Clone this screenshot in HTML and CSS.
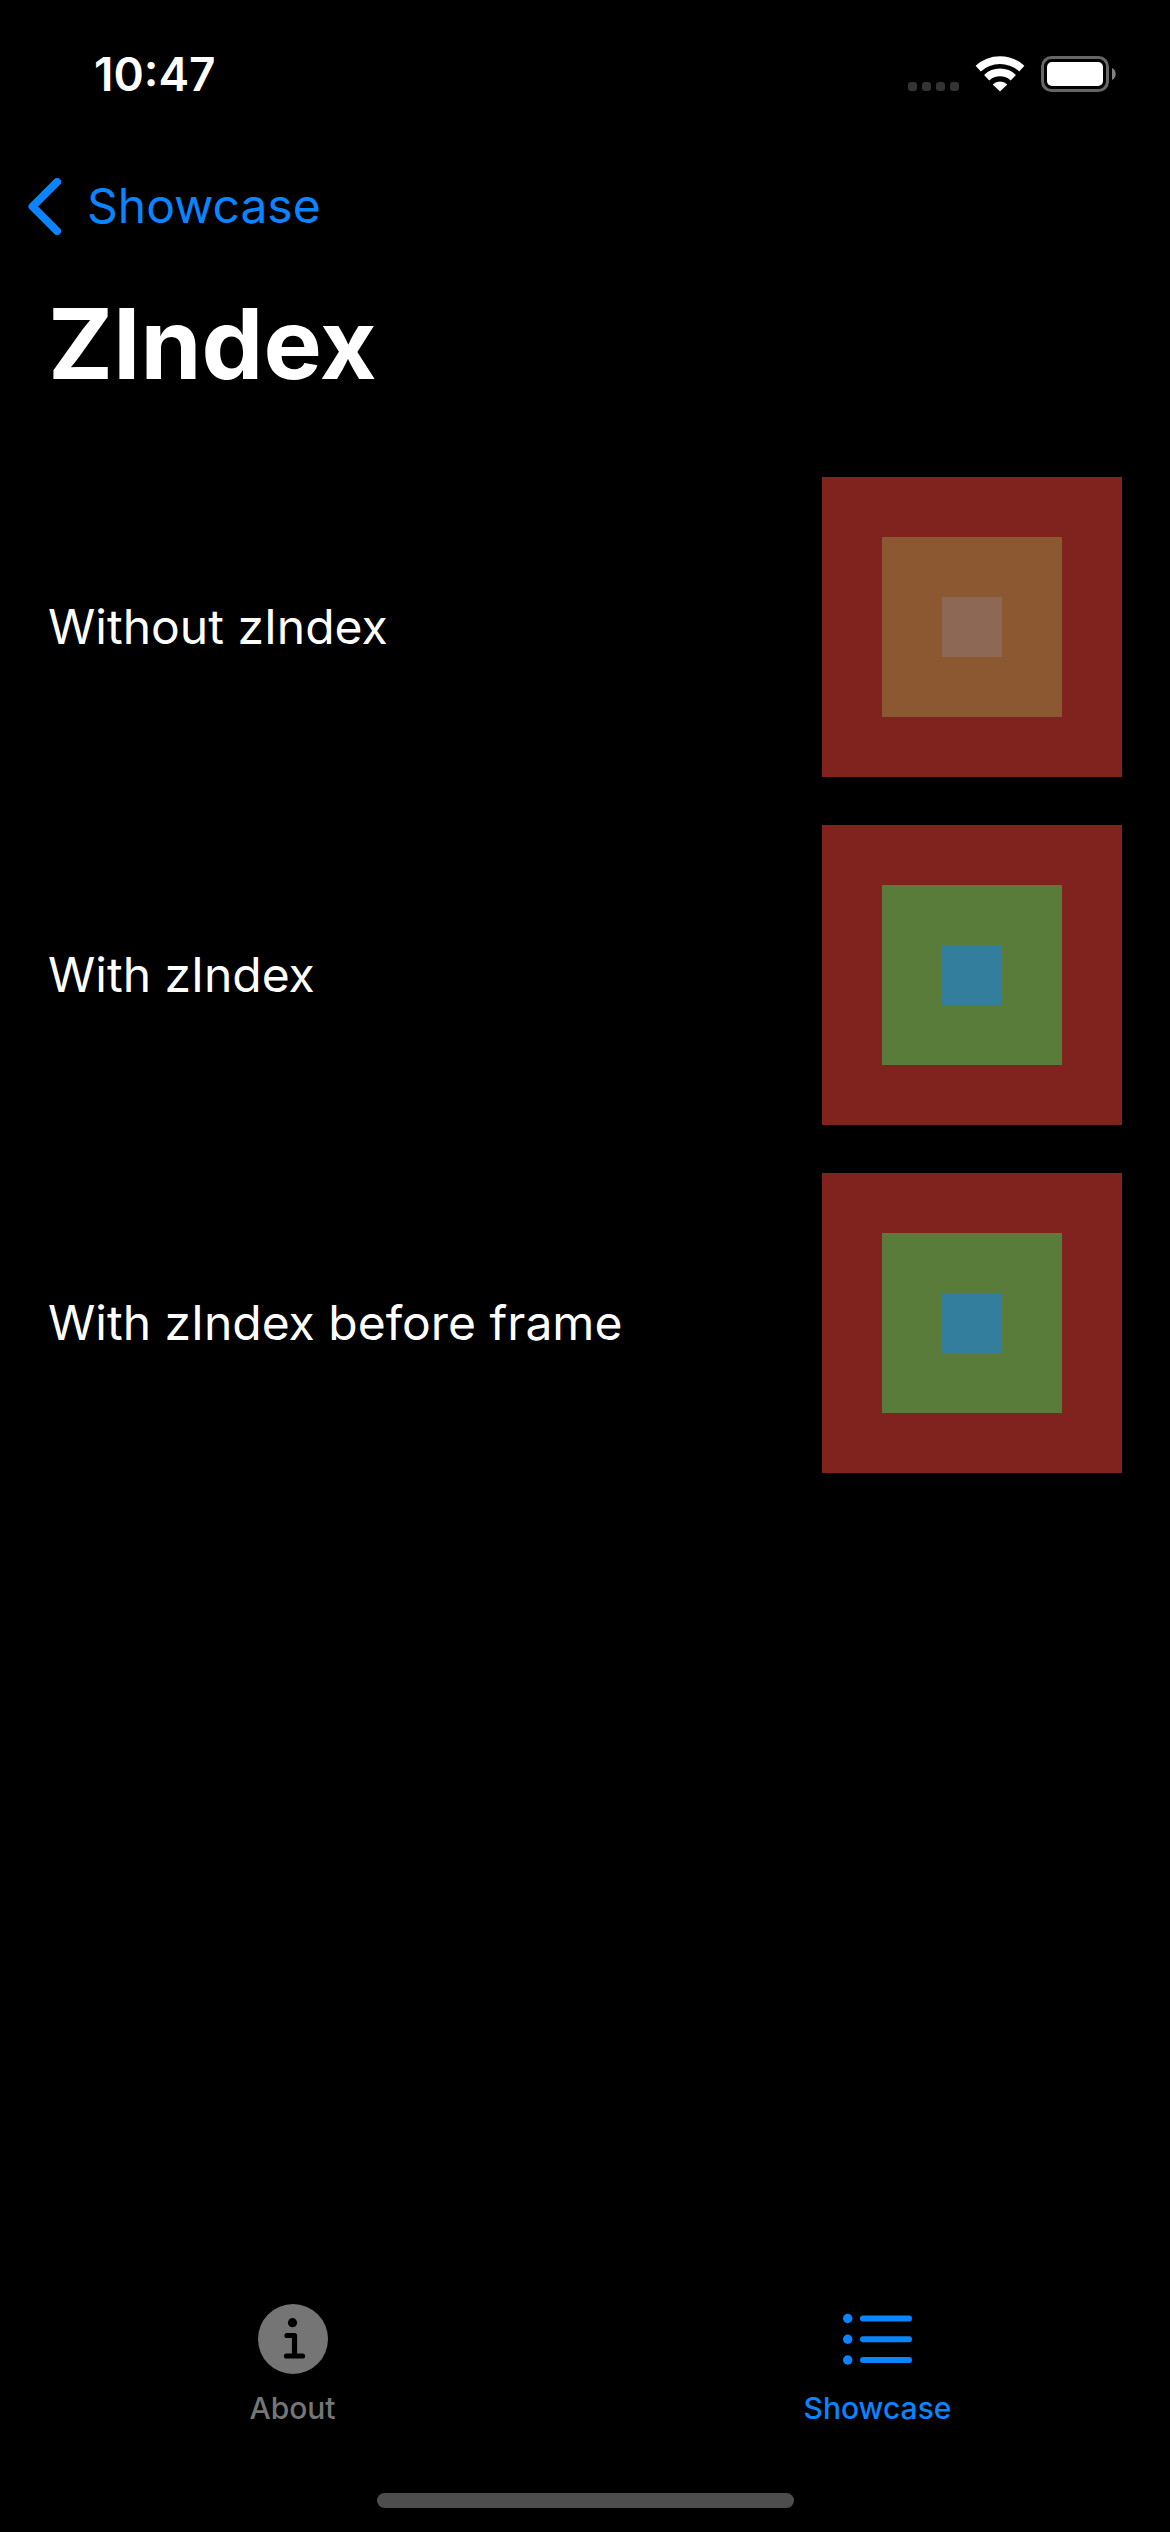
FILE: index.html
```html
<!DOCTYPE html>
<html lang="en">
<head>
<meta charset="utf-8">
<meta name="viewport" content="width=device-width, initial-scale=1">
<title>ZIndex</title>
<link rel="stylesheet" href="styles.css">
</head>
<body>
<div class="status-bar">
  <time class="clock">10:47</time>
  <div class="indicators">
    <svg class="cellular" width="51" height="36" viewBox="0 0 51 36" aria-hidden="true">
      <rect x="0" y="26" width="9" height="9" rx="3"/>
      <rect x="14" y="26" width="9" height="9" rx="3"/>
      <rect x="28" y="26" width="9" height="9" rx="3"/>
      <rect x="42" y="26" width="9" height="9" rx="3"/>
    </svg>
    <svg width="50" height="36" viewBox="0 0 50 36" aria-hidden="true">
      <g fill="none" stroke="#fff" stroke-width="7.7">
        <path d="M3.2 12.6A32 32 0 0 1 46.8 12.6"/>
        <path d="M11.7 21.7A19.5 19.5 0 0 1 38.3 21.7"/>
      </g>
      <path fill="#fff" d="M25 35.500L17.7 28.4A10.7 10.7 0 0 1 32.3 28.4Z"/>
    </svg>
    <svg width="75" height="36" viewBox="0 0 75 36" aria-hidden="true">
      <rect x="1.5" y="1.5" width="65" height="33" rx="9" fill="none" stroke="#666" stroke-width="3"/>
      <rect x="6" y="6" width="56" height="24" rx="5" fill="#fff"/>
      <path fill="#808080" d="M71 12C76 14 76 22 71 24Z"/>
    </svg>
  </div>
</div>

<header class="header">
  <a class="back" href="#showcase">
    <svg width="33" height="57" viewBox="0 0 33 57" aria-hidden="true">
      <path d="M29 4L4.500 28.500L29 53" fill="none" stroke="currentColor" stroke-width="8" stroke-linecap="round" stroke-linejoin="round"/>
    </svg>
    <span>Showcase</span>
  </a>
  <h1 class="title">ZIndex</h1>
</header>

<main class="content">
  <ul class="examples">
    <li class="example">
      <span>Without zIndex</span>
      <div class="square outer"><div class="square middle behind"><div class="square inner behind"></div></div></div>
    </li>
    <li class="example">
      <span>With zIndex</span>
      <div class="square outer"><div class="square middle"><div class="square inner"></div></div></div>
    </li>
    <li class="example">
      <span>With zIndex before frame</span>
      <div class="square outer"><div class="square middle"><div class="square inner"></div></div></div>
    </li>
  </ul>
</main>

<nav class="tab-bar">
  <a class="tab" href="#about">
    <svg width="70" height="70" viewBox="0 0 70 70" aria-hidden="true">
      <circle cx="35" cy="35" r="35" fill="currentColor"/>
      <circle cx="34.500" cy="18.700" r="4.600"/>
      <path d="M29 31.500H36.500V52M28.500 52H44.500" fill="none" stroke="#000" stroke-width="5.200" stroke-linecap="round" stroke-linejoin="round"/>
    </svg>
    <span>About</span>
  </a>
  <a class="tab active" href="#showcase" aria-current="page">
    <svg width="70" height="70" viewBox="0 0 70 70" aria-hidden="true">
      <g fill="currentColor">
        <circle cx="4.700" cy="14.500" r="4.700"/>
        <circle cx="4.700" cy="35.300" r="4.700"/>
        <circle cx="4.700" cy="56" r="4.700"/>
      </g>
      <path d="M20 14.500H66M20 35.300H66M20 56H66" stroke="currentColor" stroke-width="6" stroke-linecap="round"/>
    </svg>
    <span>Showcase</span>
  </a>
</nav>
<div class="home-indicator"></div>
</body>
</html>
```
FILE: styles.css
```css
* {
  box-sizing: border-box;
}

body {
  display: flex;
  flex-direction: column;
  min-height: 100vh;
  margin: 0;
  background: #000;
  color: #fff;
  font-family: Inter, "Liberation Sans", sans-serif;
  font-size: 48px;
  line-height: 60px;
}

a {
  color: #0a84ff;
  text-decoration: none;
}

svg {
  display: block;
  flex: none;
}

.status-bar {
  display: flex;
  align-items: center;
  justify-content: space-between;
  height: 148px;
  padding: 0 54px 0 94px;
}

.clock {
  font-size: 46px;
  font-weight: 600;
}

.indicators {
  display: flex;
  gap: 16px;
}

.cellular {
  fill: #333;
}

.header {
  padding: 28px 48px 0 28px;
}

.back {
  display: flex;
  align-items: center;
  width: fit-content;
  gap: 26px;
}

.title {
  margin: 48px 0 0 20px;
  font-size: 98px;
  font-weight: 700;
  line-height: 120px;
}

.content {
  flex: 1;
  padding: 73px 48px 48px;
}

.examples {
  display: flex;
  flex-direction: column;
  gap: 48px;
  margin: 0;
  padding: 0;
  list-style: none;
}

.example {
  display: flex;
  align-items: center;
  justify-content: space-between;
}

.square {
  display: grid;
  place-items: center;
  flex: none;
}

.outer {
  width: 300px;
  height: 300px;
  background: #80231f;
}

.middle {
  width: 180px;
  height: 180px;
  background: #597c3b;
}

.inner {
  width: 60px;
  height: 60px;
  background: #337e9d;
}

.middle.behind {
  background: #8b5832;
}

.inner.behind {
  background: #8d6855;
}

.tab-bar {
  display: grid;
  grid-template-columns: 1fr 1fr;
  padding-bottom: 67px;
}

.tab {
  display: flex;
  flex-direction: column;
  align-items: center;
  gap: 16px;
  color: #757575;
  font-size: 30px;
  font-weight: 500;
  line-height: 36px;
}

.tab.active {
  color: #0a84ff;
}

.home-indicator {
  width: 417px;
  height: 15px;
  margin: 0 auto 24px;
  border-radius: 8px;
  background: #4d4d4d;
}
```
